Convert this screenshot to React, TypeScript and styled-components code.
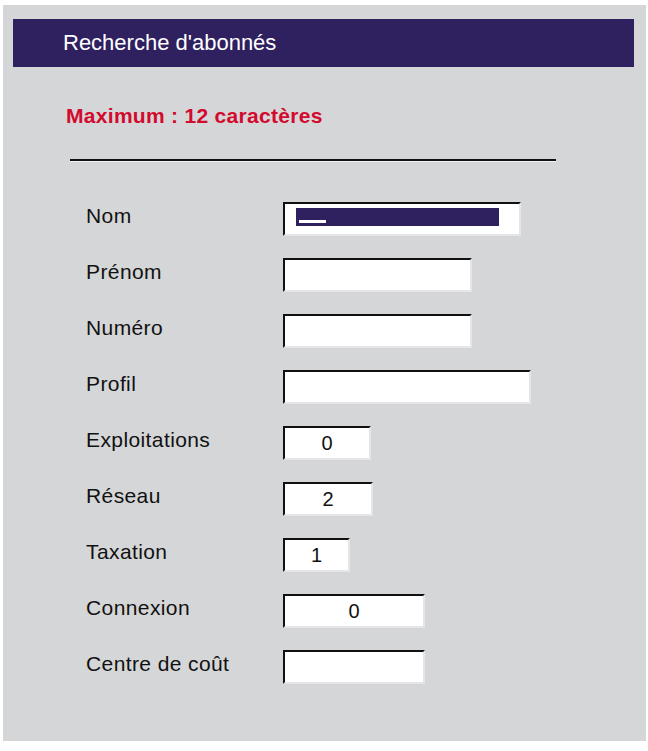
import React from "react";
import styled, { createGlobalStyle } from "styled-components";

const GlobalStyle = createGlobalStyle`
  html, body {
    margin: 0;
    padding: 0;
    background: #ffffff;
  }
  body {
    font-family: "Liberation Sans", Arial, Helvetica, sans-serif;
  }
`;

const Page = styled.div`
  padding: 5px 2px 10px 3px;
`;

const Panel = styled.div`
  width: 643px;
  height: 736px;
  background: #d5d6d8;
  padding-top: 14px;
  box-sizing: border-box;
`;

const Header = styled.div`
  margin-left: 10px;
  width: 621px;
  height: 48px;
  background: #2f2160;
  color: #ffffff;
  display: flex;
  align-items: center;
  padding-left: 50px;
  box-sizing: border-box;
  font-size: 22px;
`;

const Warning = styled.div`
  margin: 37px 0 0 63px;
  color: #d20a2e;
  font-weight: bold;
  font-size: 21px;
  letter-spacing: 0.3px;
`;

const Rule = styled.div`
  margin: 31px 0 0 67px;
  width: 486px;
  height: 2px;
  background: #111111;
  border-bottom: 1px solid #f4f4f4;
`;

const Form = styled.div`
  margin: 40px 0 0 83px;
  display: grid;
  grid-template-columns: 197px auto;
  row-gap: 22px;
  align-items: center;
`;

const Label = styled.div`
  font-size: 21px;
  color: #111111;
  letter-spacing: 0.4px;
  padding-bottom: 7px;
`;

const Field = styled.div<{ $w: number }>`
  width: ${(p) => p.$w}px;
  height: 34px;
  box-sizing: border-box;
  background: #ffffff;
  border-top: 2px solid #111111;
  border-left: 2px solid #111111;
  border-right: 2px solid #e6e6e8;
  border-bottom: 2px solid #e6e6e8;
  display: flex;
  align-items: center;
  justify-content: center;
  font-size: 20px;
  color: #111111;
`;

const Selection = styled.div`
  align-self: flex-start;
  margin: 4px auto 0 11px;
  width: 203px;
  height: 18px;
  background: #2f2160;
  position: relative;
`;

const Cursor = styled.div`
  position: absolute;
  left: 3px;
  top: 12px;
  width: 27px;
  height: 3px;
  background: #ffffff;
`;

const rows: { label: string; w: number; value?: string; selected?: boolean }[] = [
  { label: "Nom", w: 238, selected: true },
  { label: "Prénom", w: 189 },
  { label: "Numéro", w: 189 },
  { label: "Profil", w: 248 },
  { label: "Exploitations", w: 88, value: "0" },
  { label: "Réseau", w: 90, value: "2" },
  { label: "Taxation", w: 67, value: "1" },
  { label: "Connexion", w: 142, value: "0" },
  { label: "Centre de coût", w: 142 },
];

export default function App() {
  return (
    <>
      <GlobalStyle />
      <Page>
        <Panel>
          <Header>Recherche d'abonnés</Header>
          <Warning>Maximum : 12 caractères</Warning>
          <Rule />
          <Form>
            {rows.map((r) => (
              <React.Fragment key={r.label}>
                <Label>{r.label}</Label>
                <Field $w={r.w}>
                  {r.selected ? (
                    <Selection>
                      <Cursor />
                    </Selection>
                  ) : (
                    r.value
                  )}
                </Field>
              </React.Fragment>
            ))}
          </Form>
        </Panel>
      </Page>
    </>
  );
}
